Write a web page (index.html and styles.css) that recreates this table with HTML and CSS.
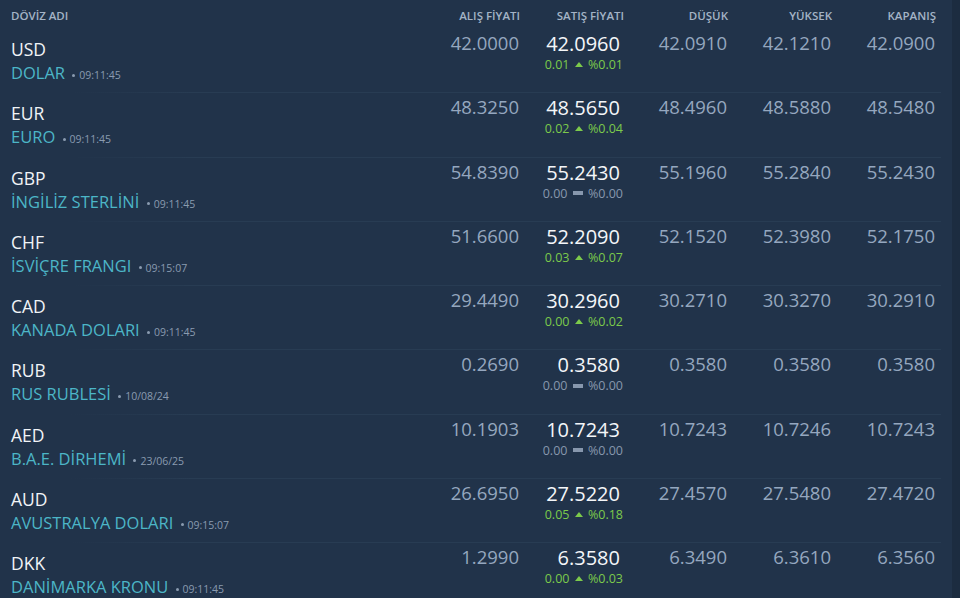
FILE: index.html
```html
<!DOCTYPE html>
<html lang="tr">
<head>
<meta charset="utf-8">
<link rel="stylesheet" href="styles.css">
</head>
<body>
<div class="page">
  <div class="board">
    <div class="row head">
      <div class="c-name">DÖVİZ ADI</div>
      <div class="c-num">ALIŞ FİYATI</div>
      <div class="c-num">SATIŞ FİYATI</div>
      <div class="c-num">DÜŞÜK</div>
      <div class="c-num">YÜKSEK</div>
      <div class="c-num">KAPANIŞ</div>
    </div>

    <div class="row item">
      <div class="c-name"><div class="code">USD</div><div class="name">DOLAR <span class="time">09:11:45</span></div></div>
      <div class="c-num val">42.0000</div>
      <div class="c-num sell"><div class="big">42.0960</div><div class="chg up">0.01 <i class="tri"></i> %0.01</div></div>
      <div class="c-num val">42.0910</div>
      <div class="c-num val">42.1210</div>
      <div class="c-num val">42.0900</div>
    </div>

    <div class="row item">
      <div class="c-name"><div class="code">EUR</div><div class="name">EURO <span class="time">09:11:45</span></div></div>
      <div class="c-num val">48.3250</div>
      <div class="c-num sell"><div class="big">48.5650</div><div class="chg up">0.02 <i class="tri"></i> %0.04</div></div>
      <div class="c-num val">48.4960</div>
      <div class="c-num val">48.5880</div>
      <div class="c-num val">48.5480</div>
    </div>

    <div class="row item">
      <div class="c-name"><div class="code">GBP</div><div class="name">İNGİLİZ STERLİNİ <span class="time">09:11:45</span></div></div>
      <div class="c-num val">54.8390</div>
      <div class="c-num sell"><div class="big">55.2430</div><div class="chg flat">0.00 <i class="bar"></i> %0.00</div></div>
      <div class="c-num val">55.1960</div>
      <div class="c-num val">55.2840</div>
      <div class="c-num val">55.2430</div>
    </div>

    <div class="row item">
      <div class="c-name"><div class="code">CHF</div><div class="name">İSVİÇRE FRANGI <span class="time">09:15:07</span></div></div>
      <div class="c-num val">51.6600</div>
      <div class="c-num sell"><div class="big">52.2090</div><div class="chg up">0.03 <i class="tri"></i> %0.07</div></div>
      <div class="c-num val">52.1520</div>
      <div class="c-num val">52.3980</div>
      <div class="c-num val">52.1750</div>
    </div>

    <div class="row item">
      <div class="c-name"><div class="code">CAD</div><div class="name">KANADA DOLARI <span class="time">09:11:45</span></div></div>
      <div class="c-num val">29.4490</div>
      <div class="c-num sell"><div class="big">30.2960</div><div class="chg up">0.00 <i class="tri"></i> %0.02</div></div>
      <div class="c-num val">30.2710</div>
      <div class="c-num val">30.3270</div>
      <div class="c-num val">30.2910</div>
    </div>

    <div class="row item">
      <div class="c-name"><div class="code">RUB</div><div class="name">RUS RUBLESİ <span class="time">10/08/24</span></div></div>
      <div class="c-num val">0.2690</div>
      <div class="c-num sell"><div class="big">0.3580</div><div class="chg flat">0.00 <i class="bar"></i> %0.00</div></div>
      <div class="c-num val">0.3580</div>
      <div class="c-num val">0.3580</div>
      <div class="c-num val">0.3580</div>
    </div>

    <div class="row item">
      <div class="c-name"><div class="code">AED</div><div class="name">B.A.E. DİRHEMİ <span class="time">23/06/25</span></div></div>
      <div class="c-num val">10.1903</div>
      <div class="c-num sell"><div class="big">10.7243</div><div class="chg flat">0.00 <i class="bar"></i> %0.00</div></div>
      <div class="c-num val">10.7243</div>
      <div class="c-num val">10.7246</div>
      <div class="c-num val">10.7243</div>
    </div>

    <div class="row item">
      <div class="c-name"><div class="code">AUD</div><div class="name">AVUSTRALYA DOLARI <span class="time">09:15:07</span></div></div>
      <div class="c-num val">26.6950</div>
      <div class="c-num sell"><div class="big">27.5220</div><div class="chg up">0.05 <i class="tri"></i> %0.18</div></div>
      <div class="c-num val">27.4570</div>
      <div class="c-num val">27.5480</div>
      <div class="c-num val">27.4720</div>
    </div>

    <div class="row item">
      <div class="c-name"><div class="code">DKK</div><div class="name">DANİMARKA KRONU <span class="time">09:11:45</span></div></div>
      <div class="c-num val">1.2990</div>
      <div class="c-num sell"><div class="big">6.3580</div><div class="chg up">0.00 <i class="tri"></i> %0.03</div></div>
      <div class="c-num val">6.3490</div>
      <div class="c-num val">6.3610</div>
      <div class="c-num val">6.3560</div>
    </div>
  </div>
  <div class="track"></div>
</div>
</body>
</html>
```

FILE: styles.css
```css
html, body {
  margin: 0;
  padding: 0;
  background: #21334a;
  height: 100%;
  overflow: hidden;
}
body {
  font-family: "Open Sans", "Noto Sans", sans-serif;
  color: #93a5bc;
}
.page {
  display: flex;
  height: 598px;
}
.board {
  flex: 1;
  padding: 0 15px 0 11px;
}
.track {
  width: 8px;
  background: #1c2c40;
}
.row {
  display: grid;
  grid-template-columns: 1fr 104px 104px 104px 104px 104px;
  position: relative;
}
.head {
  height: 29px;
  box-sizing: border-box;
  padding-top: 8px;
  font-size: 11.5px;
  line-height: 16px;
  font-weight: 600;
  color: #a4b3c6;
}
.head .c-num {
  text-align: right;
  padding-right: 1px;
}
.item {
  height: 64.25px;
  box-sizing: border-box;
}
.item::after {
  content: "";
  position: absolute;
  left: 60px;
  right: -4px;
  bottom: 0;
  height: 1px;
  background: linear-gradient(to right, rgba(40, 60, 84, 0), #283c53 120px);
}
.c-name {
  min-width: 0;
}
.item .c-name {
  padding-top: 8px;
}
.code {
  font-size: 17.5px;
  line-height: 24px;
  color: #f1f4f7;
}
.name {
  font-size: 16.5px;
  line-height: 24px;
  color: #4cb6c7;
  white-space: nowrap;
}
.time {
  font-size: 10.5px;
  color: #8a9bb0;
  margin-left: 3px;
}
.time::before {
  content: "";
  display: inline-block;
  width: 3px;
  height: 3px;
  border-radius: 50%;
  background: #8a9bb0;
  vertical-align: middle;
  margin-right: 4px;
  position: relative;
  top: -1px;
}
.c-num {
  text-align: right;
}
.val {
  padding-top: 4px;
  font-size: 18.5px;
  line-height: 20px;
  color: #95a7bf;
  padding-right: 2px;
}
.sell {
  padding-top: 4px;
}
.big {
  font-size: 20px;
  line-height: 22px;
  color: #f4f6f9;
  padding-right: 5px;
}
.chg {
  font-size: 12.5px;
  line-height: 20px;
  padding-right: 2px;
  white-space: nowrap;
}
.chg.up {
  color: #7cca4b;
}
.chg.flat {
  color: #8797ad;
}
.tri {
  display: inline-block;
  width: 0;
  height: 0;
  border-left: 4px solid transparent;
  border-right: 4px solid transparent;
  border-bottom: 5px solid #7cca4b;
  vertical-align: middle;
  position: relative;
  top: -1px;
  margin: 0 2px;
}
.bar {
  display: inline-block;
  width: 10px;
  height: 4px;
  background: #8797ad;
  vertical-align: middle;
  position: relative;
  top: -1px;
  margin: 0 2px;
}
```
